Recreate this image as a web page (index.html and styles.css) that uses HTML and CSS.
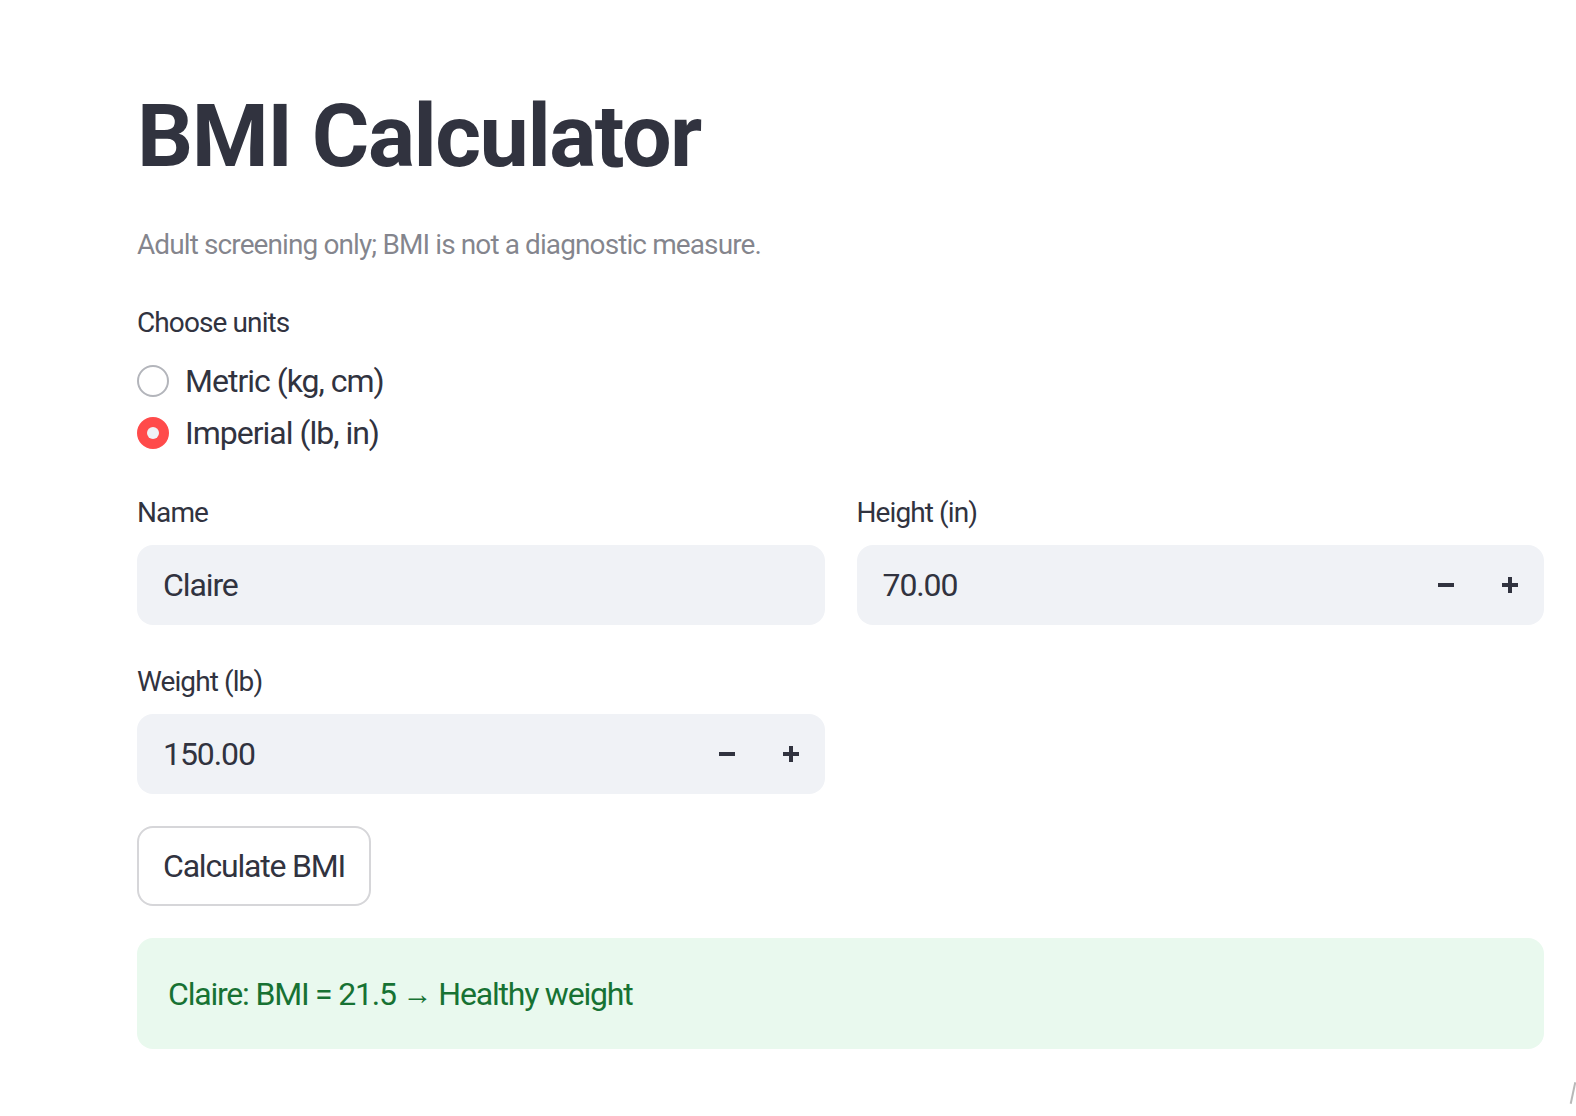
FILE: index.html
```html
<!DOCTYPE html>
<html lang="en">
<head>
<meta charset="utf-8">
<title>BMI Calculator</title>
<link rel="stylesheet" href="styles.css">
</head>
<body>
<main class="app">
  <h1 class="title">BMI Calculator</h1>
  <p class="caption">Adult screening only; BMI is not a diagnostic measure.</p>

  <div class="field-label units-label">Choose units</div>
  <div class="radio-group">
    <div class="radio-row">
      <span class="radio"></span>
      <span class="radio-text">Metric (kg, cm)</span>
    </div>
    <div class="radio-row">
      <span class="radio radio-on"><span class="radio-dot"></span></span>
      <span class="radio-text">Imperial (lb, in)</span>
    </div>
  </div>

  <div class="cols">
    <div class="field">
      <div class="field-label">Name</div>
      <div class="input">
        <span class="input-value">Claire</span>
      </div>
    </div>
    <div class="field">
      <div class="field-label">Height (in)</div>
      <div class="input">
        <span class="input-value">70.00</span>
        <span class="steppers">
          <svg class="step" width="16" height="16" viewBox="0 0 16 16"><rect x="0" y="6" width="16" height="4" fill="#31333F"/></svg>
          <svg class="step" width="16" height="16" viewBox="0 0 16 16"><rect x="0" y="6" width="16" height="4" fill="#31333F"/><rect x="6" y="0" width="4" height="16" fill="#31333F"/></svg>
        </span>
      </div>
    </div>
  </div>

  <div class="cols cols-weight">
    <div class="field">
      <div class="field-label">Weight (lb)</div>
      <div class="input">
        <span class="input-value">150.00</span>
        <span class="steppers">
          <svg class="step" width="16" height="16" viewBox="0 0 16 16"><rect x="0" y="6" width="16" height="4" fill="#31333F"/></svg>
          <svg class="step" width="16" height="16" viewBox="0 0 16 16"><rect x="0" y="6" width="16" height="4" fill="#31333F"/><rect x="6" y="0" width="4" height="16" fill="#31333F"/></svg>
        </span>
      </div>
    </div>
    <div></div>
  </div>

  <button class="btn" type="button">Calculate BMI</button>

  <div class="alert">Claire: BMI = 21.5 <span class="arrow">→</span> Healthy weight</div>
</main>
<span class="corner-grip"></span>
</body>
</html>
```

FILE: styles.css
```css
html, body {
  margin: 0;
  padding: 0;
  background: #ffffff;
}

body {
  font-family: Roboto, "Liberation Sans", sans-serif;
  color: #31333F;
  width: 1576px;
  height: 1116px;
  overflow: hidden;
  position: relative;
}

.app {
  padding: 82px 32px 0 137px;
  box-sizing: border-box;
  width: 1576px;
}

.title {
  margin: 0;
  font-size: 88px;
  line-height: 108px;
  font-weight: 700;
  letter-spacing: -1.5px;
  color: #31333F;
}

.caption {
  margin: 35px 0 0;
  font-size: 28px;
  line-height: 40px;
  color: rgba(49, 51, 63, 0.6);
  letter-spacing: -0.9px;
}

.field-label {
  font-size: 28px;
  line-height: 40px;
  height: 40px;
  letter-spacing: -0.9px;
  color: #31333F;
}

.units-label {
  margin-top: 38px;
}

.radio-group {
  margin-top: 12px;
  display: flex;
  flex-direction: column;
}

.radio-row {
  height: 52px;
  display: flex;
  align-items: center;
  gap: 16px;
}

.radio {
  width: 32px;
  height: 32px;
  box-sizing: border-box;
  border-radius: 50%;
  border: 2px solid #b3b5bb;
  display: flex;
  align-items: center;
  justify-content: center;
  flex: none;
}

.radio-on {
  background: #ff4b4b;
  border-color: #ff4b4b;
}

.radio-dot {
  width: 12px;
  height: 12px;
  border-radius: 50%;
  background: #f0f2f6;
}

.radio-text {
  font-size: 32px;
  letter-spacing: -1px;
  color: #31333F;
}

.cols {
  margin-top: 34px;
  display: grid;
  grid-template-columns: 1fr 1fr;
  gap: 32px;
}

.cols-weight {
  margin-top: 37px;
}

.field {
  display: flex;
  flex-direction: column;
  gap: 12px;
}

.input {
  height: 80px;
  border-radius: 16px;
  background: #f0f2f6;
  display: flex;
  align-items: center;
  justify-content: space-between;
  padding: 0 26px 0 26px;
  box-sizing: border-box;
}

.input-value {
  font-size: 32px;
  letter-spacing: -1.1px;
  color: #31333F;
}

.steppers {
  display: flex;
  align-items: center;
  gap: 48px;
}

.step {
  display: block;
}

.btn {
  margin-top: 32px;
  height: 80px;
  padding: 0 24px;
  border: 2px solid #d6d6d9;
  border-radius: 16px;
  background: #ffffff;
  font-family: Roboto, "Liberation Sans", sans-serif;
  font-size: 32px;
  letter-spacing: -1.2px;
  color: #31333F;
  display: block;
}

.alert {
  margin-top: 32px;
  height: 111px;
  border-radius: 16px;
  background: #e9f9ee;
  color: #177233;
  font-size: 32px;
  letter-spacing: -1.2px;
  display: flex;
  align-items: center;
  padding: 0 31px;
  box-sizing: border-box;
  white-space: pre;
}

.arrow {
  font-size: 30px;
  letter-spacing: -1px;
}

.corner-grip {
  position: absolute;
  left: 1572px;
  top: 1082px;
  width: 2px;
  height: 22px;
  background: #b8b8b8;
  transform: rotate(12deg);
}
```
